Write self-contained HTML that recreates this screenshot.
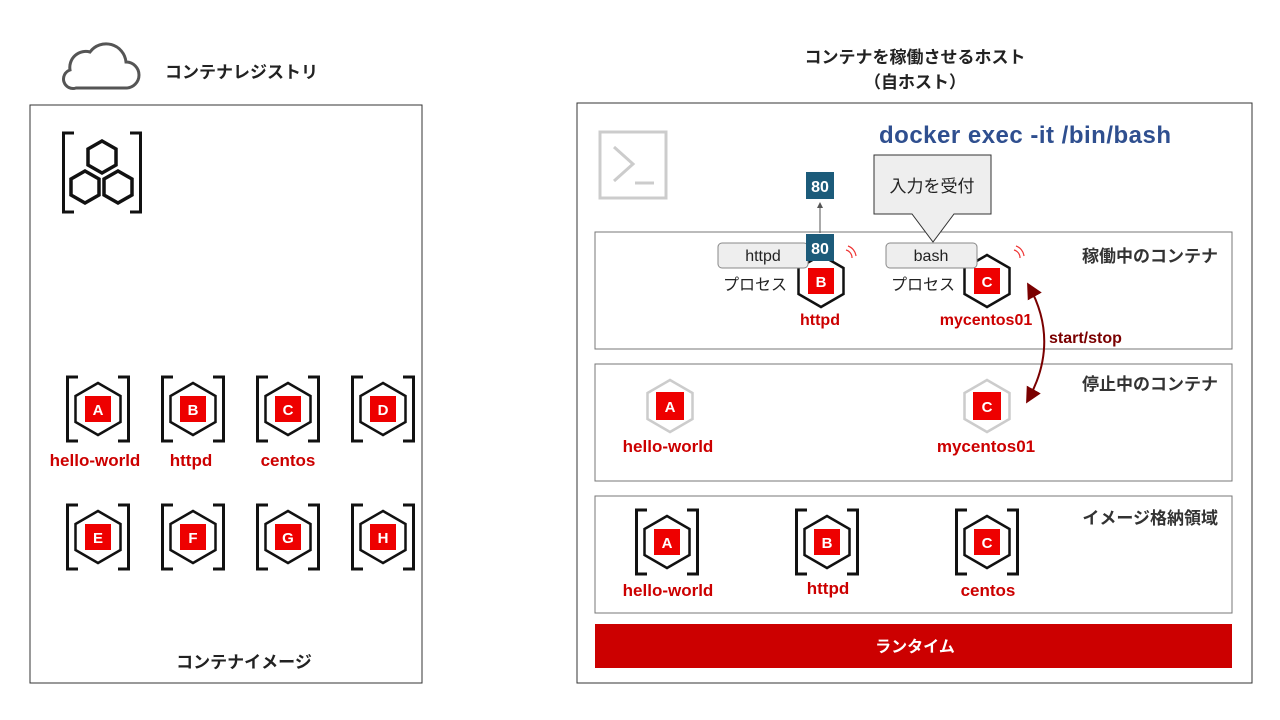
<!DOCTYPE html>
<html><head><meta charset="utf-8"><style>
html,body{margin:0;padding:0;background:#fff;}
svg{display:block;}
text{font-family:"Liberation Sans","Noto Sans CJK JP",sans-serif;}
</style></head><body>
<svg width="1280" height="720" viewBox="0 0 1280 720" xmlns="http://www.w3.org/2000/svg">
<defs>
<g id="br"><path d="M12 0H1.5V64H12M52 0H62.5V64H52" fill="none" stroke="#111" stroke-width="3"/></g>
<g id="hx"><polygon points="0,-26 22.5,-13 22.5,13 0,26 -22.5,13 -22.5,-13" fill="#fff" stroke="#111" stroke-width="2.5"/></g>
<g id="hg"><polygon points="0,-26 22.5,-13 22.5,13 0,26 -22.5,13 -22.5,-13" fill="#fff" stroke="#ccc" stroke-width="2.5"/></g>
<marker id="ah" markerWidth="8" markerHeight="8" refX="6" refY="4" orient="auto-start-reverse"><path d="M0,0L8,4L0,8z" fill="#7a0000"/></marker>
<marker id="ag" markerWidth="6" markerHeight="6" refX="5" refY="3" orient="auto"><path d="M0,0L6,3L0,6z" fill="#555"/></marker>
</defs>

<!-- left -->
<path d="M76 88H126A13 13 0 0 0 126 62A20 20 0 0 0 90 52A16 16 0 0 0 70 70A9 9 0 0 0 76 88Z" fill="none" stroke="#555" stroke-width="3"/>
<text x="165" y="78" font-size="17" font-weight="bold" fill="#222">コンテナレジストリ</text>
<rect x="30" y="105" width="392" height="578" fill="none" stroke="#333" stroke-width="1"/>
<g transform="translate(62,133)">
<path d="M12 0H1.5V79H12M68 0H78.5V79H68" fill="none" stroke="#111" stroke-width="3"/>
<polygon points="40,8 54,16 54,32 40,40 26,32 26,16" fill="none" stroke="#111" stroke-width="3.5"/>
<polygon points="23,38 37,46 37,62 23,70 9,62 9,46" fill="none" stroke="#111" stroke-width="3.5"/>
<polygon points="56,38 70,46 70,62 56,70 42,62 42,46" fill="none" stroke="#111" stroke-width="3.5"/>
</g>

<g font-weight="bold" text-anchor="middle">
<g transform="translate(66,377)"><use href="#br"/><use href="#hx" x="32" y="32"/><rect x="19" y="19" width="26" height="26" fill="#e00"/><text x="32" y="38" font-size="15" fill="#fff">A</text></g>
<g transform="translate(161,377)"><use href="#br"/><use href="#hx" x="32" y="32"/><rect x="19" y="19" width="26" height="26" fill="#e00"/><text x="32" y="38" font-size="15" fill="#fff">B</text></g>
<g transform="translate(256,377)"><use href="#br"/><use href="#hx" x="32" y="32"/><rect x="19" y="19" width="26" height="26" fill="#e00"/><text x="32" y="38" font-size="15" fill="#fff">C</text></g>
<g transform="translate(351,377)"><use href="#br"/><use href="#hx" x="32" y="32"/><rect x="19" y="19" width="26" height="26" fill="#e00"/><text x="32" y="38" font-size="15" fill="#fff">D</text></g>
<g transform="translate(66,505)"><use href="#br"/><use href="#hx" x="32" y="32"/><rect x="19" y="19" width="26" height="26" fill="#e00"/><text x="32" y="38" font-size="15" fill="#fff">E</text></g>
<g transform="translate(161,505)"><use href="#br"/><use href="#hx" x="32" y="32"/><rect x="19" y="19" width="26" height="26" fill="#e00"/><text x="32" y="38" font-size="15" fill="#fff">F</text></g>
<g transform="translate(256,505)"><use href="#br"/><use href="#hx" x="32" y="32"/><rect x="19" y="19" width="26" height="26" fill="#e00"/><text x="32" y="38" font-size="15" fill="#fff">G</text></g>
<g transform="translate(351,505)"><use href="#br"/><use href="#hx" x="32" y="32"/><rect x="19" y="19" width="26" height="26" fill="#e00"/><text x="32" y="38" font-size="15" fill="#fff">H</text></g>
<text x="95" y="466" font-size="17" fill="#c00">hello-world</text>
<text x="191" y="466" font-size="17" fill="#c00">httpd</text>
<text x="288" y="466" font-size="17" fill="#c00">centos</text>
<text x="244" y="668" font-size="17" fill="#222">コンテナイメージ</text>
</g>

<!-- right -->
<g font-weight="bold" text-anchor="middle" fill="#222" font-size="17">
<text x="915" y="63">コンテナを稼働させるホスト</text>
<text x="915" y="88">（自ホスト）</text>
</g>
<rect x="577" y="103" width="675" height="580" fill="none" stroke="#333" stroke-width="1"/>
<rect x="600" y="132" width="66" height="66" fill="none" stroke="#ccc" stroke-width="3"/>
<path d="M614 147L633 164L614 181M635 183H654" fill="none" stroke="#ccc" stroke-width="3"/>
<text x="879" y="143" font-size="24" font-weight="bold" fill="#2f4f8f" textLength="292">docker exec -it /bin/bash</text>

<rect x="595" y="232" width="637" height="117" fill="none" stroke="#777"/>
<rect x="595" y="364" width="637" height="117" fill="none" stroke="#777"/>
<rect x="595" y="496" width="637" height="117" fill="none" stroke="#777"/>
<rect x="595" y="624" width="637" height="44" fill="#c00"/>
<text x="915" y="652" font-size="16" font-weight="bold" fill="#fff" text-anchor="middle">ランタイム</text>

<g font-size="17" font-weight="bold" fill="#333" text-anchor="end">
<text x="1218" y="262">稼働中のコンテナ</text>
<text x="1218" y="390">停止中のコンテナ</text>
<text x="1218" y="524">イメージ格納領域</text>
</g>

<!-- callout -->
<path d="M874 155H991V214H954L933 242L912 214H874Z" fill="#eee" stroke="#333" stroke-width="1"/>
<text x="932" y="192" font-size="17" fill="#222" text-anchor="middle">入力を受付</text>

<!-- running -->
<use href="#hx" x="821" y="281"/>
<use href="#hx" x="987" y="281"/>
<rect x="808" y="268" width="26" height="26" fill="#e00"/>
<rect x="974" y="268" width="26" height="26" fill="#e00"/>
<g font-weight="bold" text-anchor="middle">
<text x="821" y="287" font-size="15" fill="#fff">B</text>
<text x="987" y="287" font-size="15" fill="#fff">C</text>
<text x="820" y="325" font-size="16" fill="#c00">httpd</text>
<text x="986" y="325" font-size="16" fill="#c00">mycentos01</text>
</g>
<rect x="718" y="243" width="90" height="25" rx="4" fill="#eee" stroke="#888"/>
<rect x="886" y="243" width="91" height="25" rx="4" fill="#eee" stroke="#888"/>
<g font-size="16" fill="#222" text-anchor="middle">
<text x="763" y="261">httpd</text>
<text x="931" y="261">bash</text>
<text x="755" y="290">プロセス</text>
<text x="923" y="290">プロセス</text>
</g>
<path d="M846 250A8 8 0 0 1 852 258M848 246A12 12 0 0 1 856 256" fill="none" stroke="#e33" stroke-width="1.2"/>
<path d="M1014 250A8 8 0 0 1 1020 258M1016 246A12 12 0 0 1 1024 256" fill="none" stroke="#e33" stroke-width="1.2"/>
<line x1="820" y1="233" x2="820" y2="203" stroke="#555" stroke-width="1" marker-end="url(#ag)"/>
<rect x="806" y="172" width="28" height="27" fill="#1c5b7a"/>
<rect x="806" y="234" width="28" height="27" fill="#1c5b7a"/>
<text x="820" y="192" font-size="16" font-weight="bold" fill="#fff" text-anchor="middle">80</text>
<text x="820" y="254" font-size="16" font-weight="bold" fill="#fff" text-anchor="middle">80</text>

<!-- start/stop -->
<path d="M1029 286Q1060 342 1028 400" fill="none" stroke="#7a0000" stroke-width="2" marker-start="url(#ah)" marker-end="url(#ah)"/>
<text x="1049" y="343" font-size="16" font-weight="bold" fill="#7a0000">start/stop</text>

<!-- stopped -->
<use href="#hg" x="670" y="406"/>
<use href="#hg" x="987" y="406"/>
<rect x="656" y="392" width="28" height="28" fill="#e00"/>
<rect x="973" y="392" width="28" height="28" fill="#e00"/>
<g font-weight="bold" text-anchor="middle">
<text x="670" y="412" font-size="15" fill="#fff">A</text>
<text x="987" y="412" font-size="15" fill="#fff">C</text>
<text x="668" y="452" font-size="17" fill="#c00">hello-world</text>
<text x="986" y="452" font-size="17" fill="#c00">mycentos01</text>
</g>

<!-- images -->
<g font-weight="bold" text-anchor="middle">
<g transform="translate(635,510)"><use href="#br"/><use href="#hx" x="32" y="32"/><rect x="19" y="19" width="26" height="26" fill="#e00"/><text x="32" y="38" font-size="15" fill="#fff">A</text></g>
<g transform="translate(795,510)"><use href="#br"/><use href="#hx" x="32" y="32"/><rect x="19" y="19" width="26" height="26" fill="#e00"/><text x="32" y="38" font-size="15" fill="#fff">B</text></g>
<g transform="translate(955,510)"><use href="#br"/><use href="#hx" x="32" y="32"/><rect x="19" y="19" width="26" height="26" fill="#e00"/><text x="32" y="38" font-size="15" fill="#fff">C</text></g>
<text x="668" y="596" font-size="17" fill="#c00">hello-world</text>
<text x="828" y="594" font-size="17" fill="#c00">httpd</text>
<text x="988" y="596" font-size="17" fill="#c00">centos</text>
</g>
</svg>
</body></html>
